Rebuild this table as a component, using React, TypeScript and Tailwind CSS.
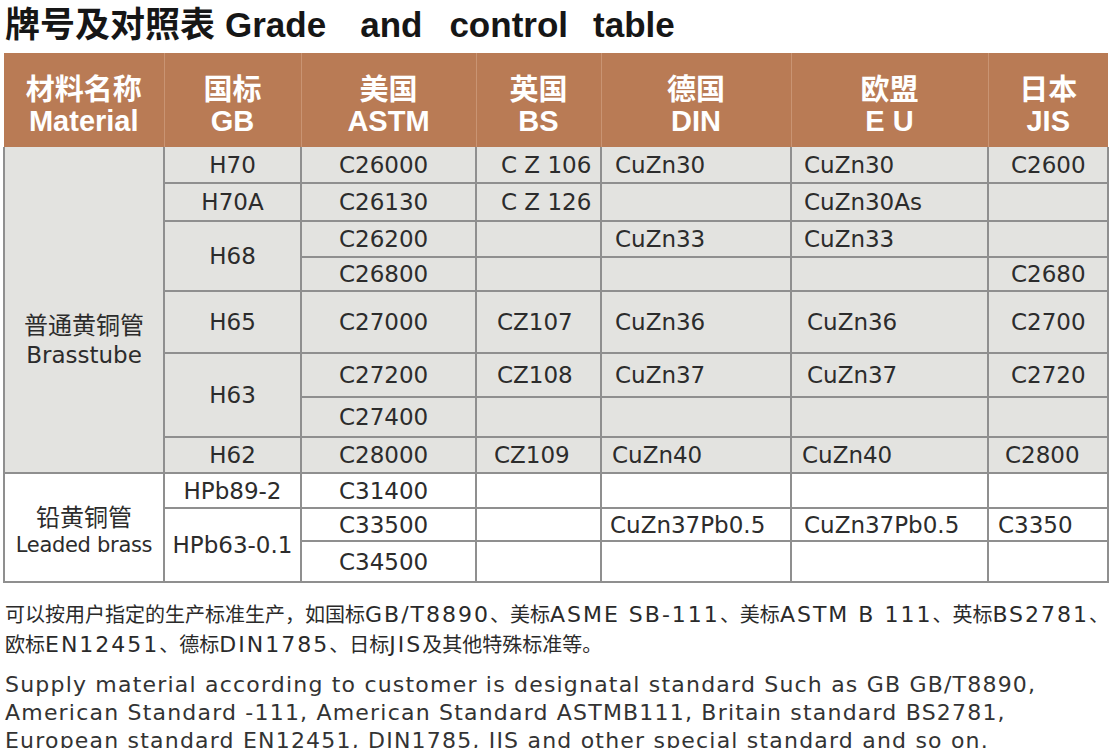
import React from "react";

const head = [
  { zh: "材料名称", en: "Material" },
  { zh: "国标", en: "GB" },
  { zh: "美国", en: "ASTM" },
  { zh: "英国", en: "BS" },
  { zh: "德国", en: "DIN" },
  { zh: "欧盟", en: "E U" },
  { zh: "日本", en: "JIS" },
];

const cell = "border-r-2 border-b-2 border-[#8f8f8f] align-middle whitespace-nowrap p-0";
const astm = cell + " pl-[37px]";
const bs = cell + " pl-[24px]";
const din = cell + " pl-[13px]";
const eu = cell + " pl-[12px]";
const jis = cell + " pl-[22px]";
const gb = cell + " text-center";

// latin parts of the chinese note are set wider, like the printed sheet
function L({ children }: { children: React.ReactNode }) {
  return <span className="text-[22px] tracking-[2px]">{children}</span>;
}

export default function App() {
  return (
    <div className="w-[1116px] h-[748px] overflow-hidden bg-white text-[#2c2c2c]">
      <h1 className="h-[53px] pl-[5px] pt-[3px] text-[35px] leading-[44px] font-bold text-[#161616] font-['Liberation_Sans','Noto_Sans_CJK_SC',sans-serif] whitespace-nowrap">
        牌号及对照表<span className="ml-[10px]">Grade</span>
        <span className="ml-[34px]">and</span>
        <span className="ml-[27px]">control</span>
        <span className="ml-[25px]">table</span>
      </h1>

      <div className="pl-[3px]">
        <table className="table-fixed border-collapse w-[1104px] font-['DejaVu_Sans','Noto_Sans_CJK_SC',sans-serif] text-[23px] leading-[26px]">
          <colgroup>
            <col className="w-[160px]" />
            <col className="w-[137px]" />
            <col className="w-[175px]" />
            <col className="w-[125px]" />
            <col className="w-[190px]" />
            <col className="w-[197px]" />
            <col className="w-[120px]" />
          </colgroup>
          <thead>
            <tr className="h-[94px] bg-[#b97b55]">
              {head.map((h, i) => (
                <th
                  key={h.en}
                  className={
                    "p-0 pt-[12px] align-middle text-center text-white font-bold text-[29px] leading-[31px] font-['Liberation_Sans','Noto_Sans_CJK_SC',sans-serif] " +
                    (i > 0 ? "border-l border-[#c99473]" : "")
                  }
                >
                  <div>{h.zh}</div>
                  <div>{h.en}</div>
                </th>
              ))}
            </tr>
          </thead>
          <tbody>
            <tr className="h-[36px] bg-[#e3e3e0]">
              <td rowSpan={8} className={cell + " border-l-2 text-center pt-[60px]"}>
                <div className="text-[24px] leading-[30px]">普通黄铜管</div>
                <div className="leading-[28px]">Brasstube</div>
              </td>
              <td className={gb}>H70</td>
              <td className={astm}>C26000</td>
              <td className={bs}>C Z 106</td>
              <td className={din}>CuZn30</td>
              <td className={eu}>CuZn30</td>
              <td className={jis}>C2600</td>
            </tr>
            <tr className="h-[38px] bg-[#e3e3e0]">
              <td className={gb}>H70A</td>
              <td className={astm}>C26130</td>
              <td className={bs}>C Z 126</td>
              <td className={din}></td>
              <td className={eu}>CuZn30As</td>
              <td className={jis}></td>
            </tr>
            <tr className="h-[36px] bg-[#e3e3e0]">
              <td rowSpan={2} className={gb}>H68</td>
              <td className={astm}>C26200</td>
              <td className={bs}></td>
              <td className={din}>CuZn33</td>
              <td className={eu}>CuZn33</td>
              <td className={jis}></td>
            </tr>
            <tr className="h-[34px] bg-[#e3e3e0]">
              <td className={astm}>C26800</td>
              <td className={bs}></td>
              <td className={din}></td>
              <td className={eu}></td>
              <td className={jis}>C2680</td>
            </tr>
            <tr className="h-[62px] bg-[#e3e3e0]">
              <td className={gb}>H65</td>
              <td className={astm}>C27000</td>
              <td className={bs + " !pl-[20px]"}>CZ107</td>
              <td className={din}>CuZn36</td>
              <td className={eu + " !pl-[15px]"}>CuZn36</td>
              <td className={jis}>C2700</td>
            </tr>
            <tr className="h-[44px] bg-[#e3e3e0]">
              <td rowSpan={2} className={gb}>H63</td>
              <td className={astm}>C27200</td>
              <td className={bs + " !pl-[20px]"}>CZ108</td>
              <td className={din}>CuZn37</td>
              <td className={eu + " !pl-[15px]"}>CuZn37</td>
              <td className={jis}>C2720</td>
            </tr>
            <tr className="h-[40px] bg-[#e3e3e0]">
              <td className={astm}>C27400</td>
              <td className={bs}></td>
              <td className={din}></td>
              <td className={eu}></td>
              <td className={jis}></td>
            </tr>
            <tr className="h-[36px] bg-[#e3e3e0]">
              <td className={gb}>H62</td>
              <td className={astm}>C28000</td>
              <td className={bs + " !pl-[17px]"}>CZ109</td>
              <td className={din + " !pl-[10px]"}>CuZn40</td>
              <td className={eu + " !pl-[10px]"}>CuZn40</td>
              <td className={jis + " !pl-[16px]"}>C2800</td>
            </tr>
            <tr className="h-[35px] bg-white">
              <td rowSpan={3} className={cell + " border-l-2 text-center pt-[6px]"}>
                <div className="text-[24px] leading-[28px]">铅黄铜管</div>
                <div className="text-[21px] leading-[26px] tracking-[-0.3px]">Leaded brass</div>
              </td>
              <td className={gb}>HPb89-2</td>
              <td className={astm}>C31400</td>
              <td className={bs}></td>
              <td className={din}></td>
              <td className={eu}></td>
              <td className={jis}></td>
            </tr>
            <tr className="h-[33px] bg-white">
              <td rowSpan={2} className={gb}>HPb63-0.1</td>
              <td className={astm}>C33500</td>
              <td className={bs}></td>
              <td className={din + " !pl-[8px]"}>CuZn37Pb0.5</td>
              <td className={eu}>CuZn37Pb0.5</td>
              <td className={jis + " !pl-[9px]"}>C3350</td>
            </tr>
            <tr className="h-[41px] bg-white">
              <td className={astm}>C34500</td>
              <td className={bs}></td>
              <td className={din}></td>
              <td className={eu}></td>
              <td className={jis}></td>
            </tr>
          </tbody>
        </table>
      </div>

      <p className="mt-[17px] pl-[5px] text-[20px] leading-[29px] text-[#2a2a2a] whitespace-nowrap font-['DejaVu_Sans','Noto_Sans_CJK_SC',sans-serif]">
        可以按用户指定的生产标准生产，如国标<L>GB/T8890</L>、美标<L>ASME SB-111</L>、美标<L>ASTM B 111</L>、英标<L>BS2781</L>、
        <br />
        欧标<L>EN12451</L>、德标<L>DIN1785</L>、日标<L>JIS</L>及其他特殊标准等。
      </p>
      <p className="mt-[11px] pl-[5px] text-[22px] leading-[28px] text-[#333333] whitespace-nowrap tracking-[1.2px] font-['DejaVu_Sans',sans-serif]">
        Supply material according to customer is designatal standard Such as GB GB/T8890,
        <br />
        American Standard -111, American Standard ASTMB111, Britain standard BS2781,
        <br />
        European standard EN12451, DIN1785, JIS and other special standard and so on.
      </p>
    </div>
  );
}
